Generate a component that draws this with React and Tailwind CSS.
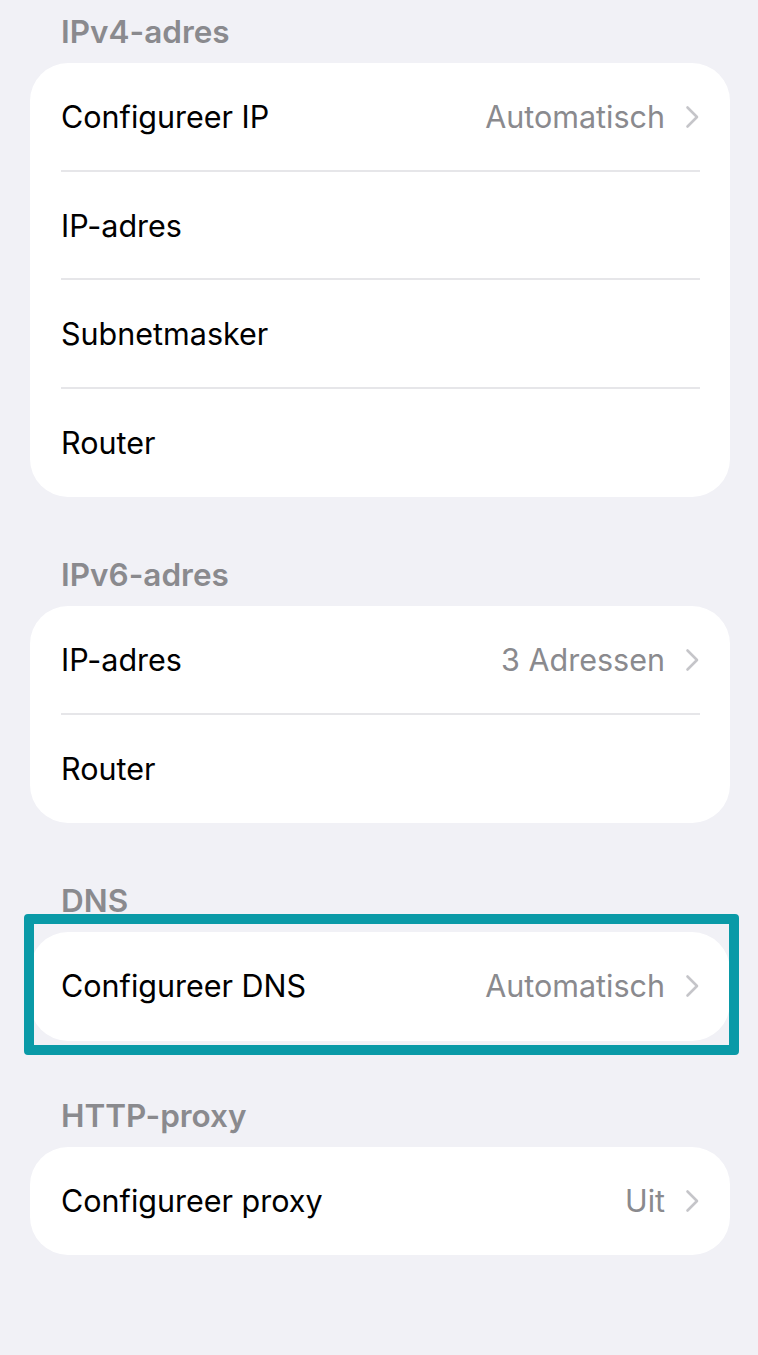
import React from "react";

const sections = [
  {
    title: "IPv4-adres",
    rows: [
      { label: "Configureer IP", value: "Automatisch", link: true },
      { label: "IP-adres" },
      { label: "Subnetmasker" },
      { label: "Router" },
    ],
  },
  {
    title: "IPv6-adres",
    rows: [
      { label: "IP-adres", value: "3 Adressen", link: true },
      { label: "Router" },
    ],
  },
  {
    title: "DNS",
    highlight: true,
    rows: [{ label: "Configureer DNS", value: "Automatisch", link: true }],
  },
  {
    title: "HTTP-proxy",
    tight: true,
    rows: [{ label: "Configureer proxy", value: "Uit", link: true }],
  },
];

function Chevron() {
  return (
    <svg width="14" height="24" viewBox="0 0 14 24" fill="none" className="ml-[20px]">
      <path d="M2.5 2.5 L12 12 L2.5 21.5" stroke="#c5c5c9" strokeWidth="2.6" strokeLinecap="round" strokeLinejoin="round" />
    </svg>
  );
}

function Row({ row, last }) {
  return (
    <div className="relative flex h-[108.5px] items-center pl-[31px] pr-[31px]">
      <span className="flex-1 text-black">{row.label}</span>
      {row.value && <span className="text-[#8a8a8e]">{row.value}</span>}
      {row.link && <Chevron />}
      {!last && <div className="absolute bottom-0 left-[31px] right-[30px] h-[2px] bg-[#e6e6e9]" />}
    </div>
  );
}

function Section({ section }) {
  return (
    <div className={section.tight ? "mt-[57px]" : "mt-[60px] first:mt-0"}>
      <div className="mb-[13px] pl-[31px] text-[31.5px] leading-[36px] font-semibold text-[#8a8a8e]">{section.title}</div>
      <div className="relative">
        <div className="overflow-hidden rounded-[38px] bg-white">
          {section.rows.map((row, i) => (
            <Row key={row.label + i} row={row} last={i === section.rows.length - 1} />
          ))}
        </div>
        {section.highlight && (
          <div className="pointer-events-none absolute -top-[18px] -bottom-[14px] -left-[6px] -right-[9px] rounded-[4px] border-[10px] border-[#0a9aa7]" />
        )}
      </div>
    </div>
  );
}

export default function App() {
  return (
    <div
      className="min-h-screen bg-[#f1f1f6] pl-[30px] pr-[28px] pt-[14px] text-[30.5px]"
      style={{ fontFamily: "Inter, 'Noto Sans', sans-serif" }}
    >
      {sections.map((s) => (
        <Section key={s.title} section={s} />
      ))}
    </div>
  );
}
